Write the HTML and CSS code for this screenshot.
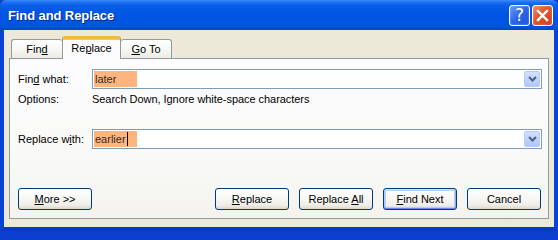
FILE: index.html
```html
<!DOCTYPE html>
<html>
<head>
<meta charset="utf-8">
<link rel="stylesheet" href="styles.css">
</head>
<body>
<div class="window">
  <div class="titlebar">
    <span class="title">Find and Replace</span>
    <div class="tbtns">
      <span class="tbtn help">?</span>
      <span class="tbtn close">
        <svg width="13" height="13" viewBox="0 0 13 13"><path d="M2 2 L11 11 M11 2 L2 11" stroke="#fff" stroke-width="2.4" stroke-linecap="square"/></svg>
      </span>
    </div>
  </div>
  <div class="client">
    <div class="tabs">
      <div class="tab t-find">Fin<u>d</u></div>
      <div class="tab active">Re<u>p</u>lace</div>
      <div class="tab t-goto"><u>G</u>o To</div>
    </div>
    <div class="panel">
      <div class="row">
        <span class="lbl">Fin<u>d</u> what:</span>
        <div class="combo">
          <span class="sel">later</span>
          <span class="drop"><svg width="9" height="6" viewBox="0 0 9 6"><path d="M1 1 L4.5 4.5 L8 1" fill="none" stroke="#4d6185" stroke-width="2"/></svg></span>
        </div>
      </div>
      <div class="row opts">
        <span class="lbl">Options:</span>
        <span class="optval">Search Down, Ignore white-space characters</span>
      </div>
      <div class="row repl">
        <span class="lbl">Replace w<u>i</u>th:</span>
        <div class="combo">
          <span class="sel">earlier<span class="caret"></span></span>
          <span class="drop"><svg width="9" height="6" viewBox="0 0 9 6"><path d="M1 1 L4.5 4.5 L8 1" fill="none" stroke="#4d6185" stroke-width="2"/></svg></span>
        </div>
      </div>
      <div class="buttons">
        <button class="btn"><u>M</u>ore &gt;&gt;</button>
        <div class="right">
          <button class="btn"><u>R</u>eplace</button>
          <button class="btn">Replace <u>A</u>ll</button>
          <button class="btn focus"><u>F</u>ind Next</button>
          <button class="btn">Cancel</button>
        </div>
      </div>
    </div>
  </div>
</div>
</body>
</html>
```

FILE: styles.css
```css
* { box-sizing: border-box; }
html, body { margin: 0; padding: 0; }
body {
  width: 558px;
  height: 231px;
  overflow: hidden;
  font-family: "Liberation Sans", Arial, sans-serif;
  font-size: 11px;
  color: #000;
  background: #0a3fd0;
}
.window {
  width: 558px;
  height: 231px;
  display: flex;
  flex-direction: column;
}
.titlebar {
  height: 30px;
  flex: none;
  display: flex;
  align-items: center;
  justify-content: space-between;
  padding: 0 5px 0 8px;
  border-radius: 6px 6px 0 0;
  background: linear-gradient(to bottom, #3a8cf8 0%, #1e6ff2 8%, #0a5ee8 18%, #0057e3 45%, #0055e1 75%, #0151dc 90%, #0146c6 100%);
}
.title {
  color: #fff;
  font-weight: bold;
  font-size: 13px;
  text-shadow: 1px 1px 0 #0a2a8a;
  letter-spacing: -0.1px;
}
.tbtns { display: flex; gap: 2px; }
.tbtn {
  width: 21px;
  height: 21px;
  border: 1px solid #fff;
  border-radius: 3px;
  display: flex;
  align-items: center;
  justify-content: center;
  color: #fff;
}
.help {
  background: linear-gradient(135deg, #6d9cf5 0%, #2a66ea 50%, #1f55d8 100%);
  font-size: 17px;
  font-family: "DejaVu Sans", sans-serif;
  box-shadow: inset 0 0 2px rgba(255,255,255,0.4);
}
.close {
  background: linear-gradient(135deg, #f08a6c 0%, #e2522c 45%, #cc4222 100%);
  box-shadow: inset 0 0 2px rgba(255,255,255,0.4);
}
.client {
  flex: 1;
  background: #ece9d8;
  border-left: 4px solid #0842d6;
  border-right: 4px solid #0842d6;
  border-bottom: 4px solid #0838c8;
  padding: 6px 5px 8px 5px;
  display: flex;
  flex-direction: column;
}
.tabs {
  display: flex;
  align-items: flex-end;
  height: 22px;
  padding-left: 2px;
  position: relative;
  z-index: 2;
}
.tab {
  height: 19px;
  border: 1px solid #919b9c;
  border-bottom: none;
  border-radius: 3px 3px 0 0;
  background: linear-gradient(to bottom, #ffffff 0%, #f7f7f4 50%, #ecebe5 100%);
  display: flex;
  align-items: center;
  justify-content: center;
}
.t-find { width: 51px; border-right: none; }
.t-goto { width: 51px; border-left: none; }
.tab.active {
  width: 59px;
  height: 23px;
  margin-bottom: -1px;
  background: #fcfcfe;
  border-top: 3px solid #f5b93a;
  border-left: 1px solid #919b9c;
  border-right: 1px solid #919b9c;
  padding-bottom: 2px;
  box-shadow: inset 0 1px 0 #ffc842;
}
.panel {
  height: 161px;
  border: 1px solid #919b9c;
  background: linear-gradient(to bottom, #fcfcfe 0%, #f9f9f7 60%, #f4f3ee 100%);
  padding: 10px 6px 8px 8px;
  display: flex;
  flex-direction: column;
}
.row {
  display: flex;
  align-items: center;
  height: 20px;
}
.lbl { width: 74px; flex: none; }
.opts { margin-top: 1px; height: 17px; }
.optval { letter-spacing: -0.05px; }
.repl { margin-top: 22px; }
.combo {
  flex: 1;
  height: 20px;
  border: 1px solid #7f9db9;
  background: #fff;
  display: flex;
  align-items: center;
  justify-content: space-between;
  padding: 0 1px;
}
.sel {
  display: flex;
  align-items: center;
  width: 43px;
  height: 16px;
  background: #fcb57f;
  color: #3a2a20;
  padding-left: 1px;
}
.caret {
  display: inline-block;
  width: 1px;
  height: 14px;
  background: #000;
  margin-left: 1px;
}
.drop {
  width: 16px;
  height: 16px;
  border: 1px solid #b9cbf5;
  border-radius: 2px;
  background: linear-gradient(to bottom, #d2e0fd 0%, #c0d3fb 50%, #b1c7f6 100%);
  display: flex;
  align-items: center;
  justify-content: center;
}
.buttons {
  margin-top: auto;
  display: flex;
  align-items: center;
  padding-right: 1px;
}
.right {
  margin-left: auto;
  display: flex;
  gap: 10px;
}
.btn {
  width: 74px;
  height: 22px;
  border: 1px solid #003c74;
  border-radius: 3px;
  background: linear-gradient(to bottom, #ffffff 0%, #f8f8f5 40%, #efeee8 80%, #dcd8cc 100%);
  font-family: "Liberation Sans", Arial, sans-serif;
  font-size: 11px;
  color: #000;
  padding: 0;
  margin: 0;
}
.btn.focus {
  box-shadow: inset 0 1px 0 #cee7ff, inset 0 -1px 0 #6982ee, inset 1px 0 0 #b4ccf7, inset -1px 0 0 #8fa9f2, inset 0 0 0 2px #b6cdf6;
}
```
